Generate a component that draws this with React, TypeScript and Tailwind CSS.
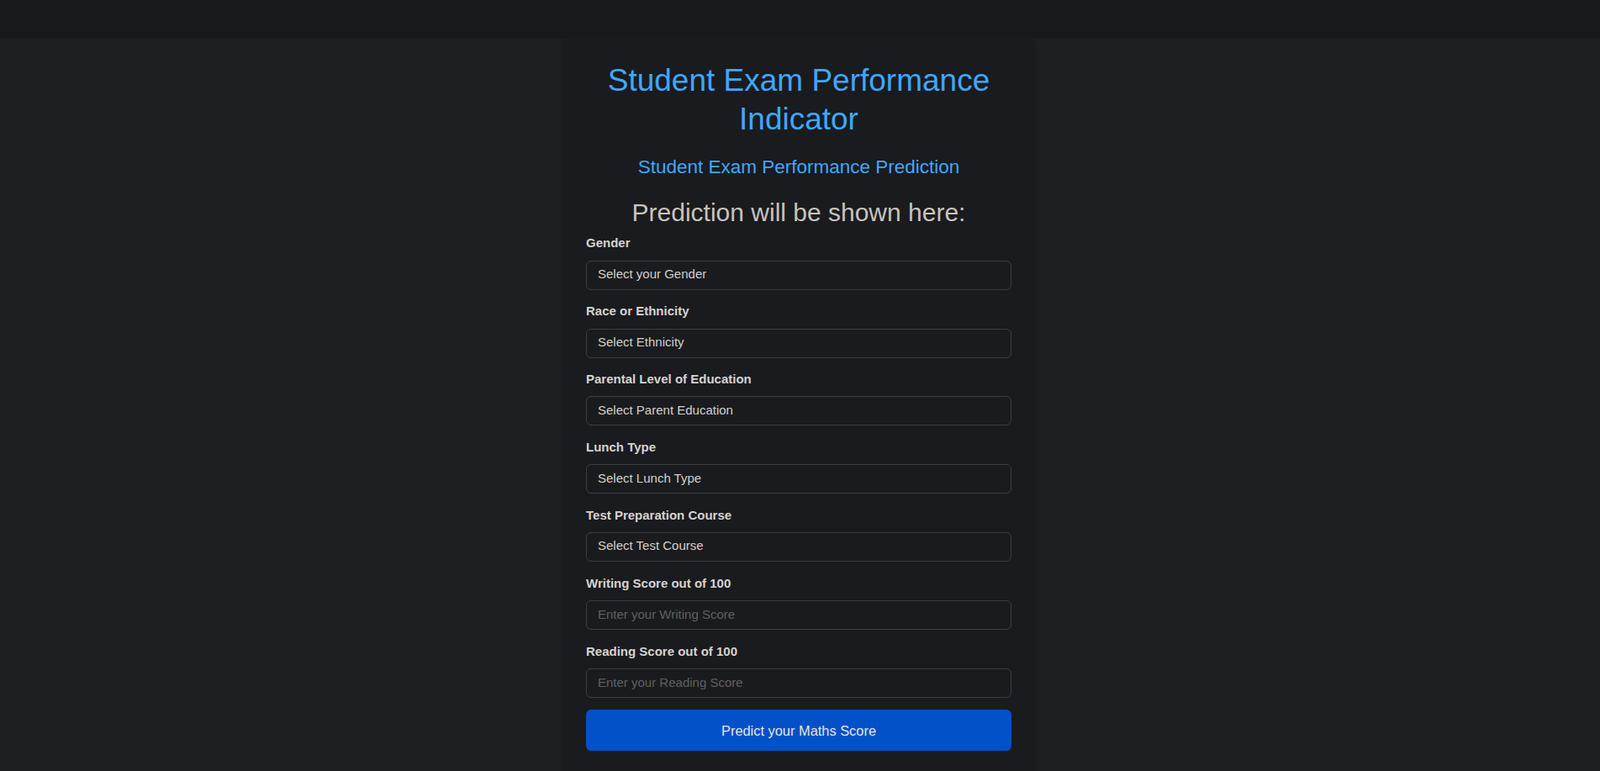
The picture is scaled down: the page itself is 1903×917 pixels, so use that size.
import React from "react";

const selects = [
  { label: "Gender", placeholder: "Select your Gender" },
  { label: "Race or Ethnicity", placeholder: "Select Ethnicity" },
  { label: "Parental Level of Education", placeholder: "Select Parent Education" },
  { label: "Lunch Type", placeholder: "Select Lunch Type" },
  { label: "Test Preparation Course", placeholder: "Select Test Course" },
];

const inputs = [
  { label: "Writing Score out of 100", placeholder: "Enter your Writing Score" },
  { label: "Reading Score out of 100", placeholder: "Enter your Reading Score" },
];

export default function App() {
  return (
    <div
      className="h-screen overflow-hidden bg-[#1c1e21] flex flex-col"
      style={{ fontFamily: '"Liberation Sans", Arial, sans-serif' }}
    >
      <div className="h-[46px] w-full bg-[#18191b] shrink-0" />
      <div className="flex justify-center pr-[3px]">
        <div className="w-[564px] bg-[#1a1b1e] rounded-t-[8px] px-[29px] pt-[27.4px] pb-[29px]">
          <h1 className="text-center text-[37px] leading-[46px] text-[#3ea8ff] font-normal">
            Student Exam Performance
            <br />
            Indicator
          </h1>
          <h2 className="mt-[20px] text-center text-[22.5px] leading-[27px] text-[#3ea8ff] font-normal">
            Student Exam Performance Prediction
          </h2>
          <h2 className="mt-[22.6px] text-center text-[30px] leading-[36px] text-[#c8c3bc] font-normal">
            Prediction will be shown here:
          </h2>
          <form className="mt-[7.2px]" onSubmit={(e) => e.preventDefault()}>
            {selects.map((s) => (
              <div key={s.label} className="mb-[14.4px]">
                <label className="block text-[15px] leading-[22.5px] font-bold text-[#d6d3cf] mb-[9px]">
                  {s.label}
                </label>
                <div className="h-[35px] w-full rounded-[6px] border border-[#3a3d40] bg-[#1a1b1e] px-[13px] flex items-center pb-[2px] text-[15px] text-[#d3cfc9]">
                  {s.placeholder}
                </div>
              </div>
            ))}
            {inputs.map((s) => (
              <div key={s.label} className="mb-[14.4px]">
                <label className="block text-[15px] leading-[22.5px] font-bold text-[#d6d3cf] mb-[9px]">
                  {s.label}
                </label>
                <input
                  type="number"
                  placeholder={s.placeholder}
                  className="h-[35px] w-full rounded-[6px] border border-[#3a3d40] bg-[#1a1b1e] px-[13px] pb-[2px] text-[15px] text-[#d3cfc9] placeholder:text-[#5e6062] outline-none"
                />
              </div>
            ))}
            <button
              type="submit"
              className="h-[49px] w-full rounded-[6px] bg-[#0051c8] text-[16.4px] text-[#e8e6e3]"
            >
              Predict your Maths Score
            </button>
          </form>
        </div>
      </div>
    </div>
  );
}
